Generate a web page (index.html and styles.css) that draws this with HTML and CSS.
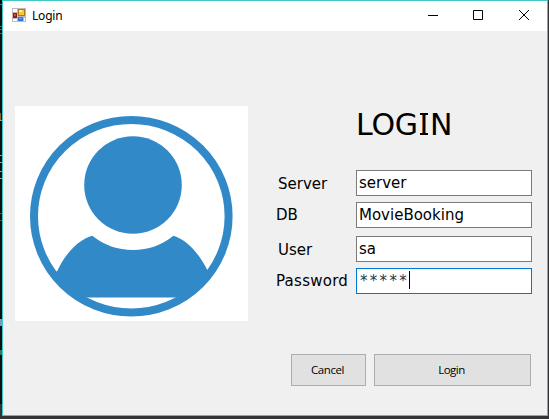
FILE: index.html
```html
<!DOCTYPE html>
<html lang="en">
<head>
<meta charset="utf-8">
<title>Login</title>
<link rel="stylesheet" href="styles.css">
</head>
<body>
<div class="desktop">
  <div class="gutter"></div>
  <main class="window">
    <header class="titlebar">
      <svg class="app-icon" width="14" height="14" viewBox="0 0 14 14" shape-rendering="crispEdges">
        <path fill="#bcbcbc" d="M0 0h14v14H0z"/>
        <path fill="#fff" d="M1 1h4v3H1zM1 11h4v2H1zM12 10h1v3h-1z"/>
        <path fill="#8f1d1a" d="M1 5h4v5H1z"/>
        <path fill="#d8473c" d="M2 6h2v2H2z"/>
        <path fill="#b07a10" d="M6 1h7v7H6z"/>
        <path fill="#f8c93c" d="M7 2h5v5H7z"/>
        <path fill="#fff0a0" d="M7 2h3v2H7z"/>
        <path fill="#3a70d0" d="M6 9h5v4H6z"/>
        <path fill="#78aaf5" d="M7 10h3v1H7z"/>
      </svg>
      <span class="title">Login</span>
      <div class="controls">
        <svg width="45" height="30" viewBox="0 0 45 30"><path d="M17 14.5h10"/></svg>
        <svg width="45" height="30" viewBox="0 0 45 30"><path d="M17.5 9.5h9v9h-9z"/></svg>
        <svg width="45" height="30" viewBox="0 0 45 30"><path d="M18 9l10 10M28 9l-10 10"/></svg>
      </div>
    </header>
    <section class="content">
      <svg class="avatar" width="233" height="215" viewBox="15 106 233 215">
        <path class="panel" d="M15 106h233v215H15z"/>
        <ellipse class="ring" cx="131.3" cy="216.3" rx="97.3" ry="96.3"/>
        <circle class="shape" cx="133" cy="185" r="48.8"/>
        <path class="shape" d="M92.3 235.8Q110 250 133 250Q156 250 173.4 235.8C187 240 199.500 254 207.300 270L211 275L192 291L182 297.600H80L70 291L52 275L57.300 271C64 256 77 240 92.300 235.800Z"/>
      </svg>
      <form class="form">
        <h1>LOG<span class="serif-i">I</span>N</h1>
        <div class="row server"><label>Server</label><div class="field">server</div></div>
        <div class="row db"><label>DB</label><div class="field">MovieBooking</div></div>
        <div class="row user"><label>User</label><div class="field">sa</div></div>
        <div class="row password"><label>Password</label><div class="field focused"><span class="mask">*****</span><i class="caret"></i></div></div>
        <div class="actions">
          <button type="button" class="cancel"><span>Cancel</span></button>
          <button type="button" class="submit"><span>Login</span></button>
        </div>
      </form>
    </section>
  </main>
</div>
</body>
</html>
```
FILE: styles.css
```css
* { box-sizing: border-box; }
body { margin: 0; background: #333336; overflow: hidden; }
.desktop { display: flex; width: 549px; height: 419px; }
.gutter {
  width: 2px;
  height: 404px;
  background:
    linear-gradient(#267c7c, #267c7c) 0 4px / 2px 1px no-repeat,
    linear-gradient(#267c7c, #267c7c) 0 26px / 2px 1px no-repeat,
    linear-gradient(#267c7c, #267c7c) 0 29px / 2px 1px no-repeat,
    linear-gradient(#267c7c, #267c7c) 0 33px / 2px 1px no-repeat,
    linear-gradient(#a35a20, #a35a20) 0 113px / 1px 7px no-repeat,
    linear-gradient(#8fa0a0, #8fa0a0) 0 120px / 2px 1px no-repeat,
    linear-gradient(#8fa0a0, #8fa0a0) 0 155px / 2px 1px no-repeat,
    linear-gradient(#8fa0a0, #8fa0a0) 0 162px / 2px 1px no-repeat,
    linear-gradient(#8da878, #8da878) 0 171px / 2px 1px no-repeat,
    linear-gradient(#8da878, #8da878) 0 178px / 2px 1px no-repeat,
    linear-gradient(#2d6b2d, #2d6b2d) 0 213px / 2px 1px no-repeat,
    linear-gradient(#2d6b2d, #2d6b2d) 0 220px / 2px 1px no-repeat,
    linear-gradient(#6f9fc4, #6f9fc4) 0 319px / 2px 7px no-repeat,
    linear-gradient(#2a7a68, #2a7a68) 0 350px / 2px 5px no-repeat,
    #101012;
}
.window {
  width: 546px;
  height: 416px;
  border: 1px solid #40c8c8;
  background: #f0f0f0;
}
.titlebar { display: flex; height: 30px; background: #fff; }
.app-icon { margin: 7px 0 0 9px; }
.title {
  margin-left: 6px;
  font: 12px/30px "Noto Sans", sans-serif;
  letter-spacing: -0.2px;
  color: #000;
}
.controls { display: flex; margin-left: auto; margin-right: 1px; }
.controls path { fill: none; stroke: #000; stroke-width: 1; }
.content { display: flex; }
.avatar { display: block; margin: 75px 0 0 12px; }
.panel { fill: #fff; }
.ring { fill: none; stroke: #3189c8; stroke-width: 8; }
.shape { fill: #3189c8; }
.form {
  width: 256px;
  margin-left: 28px;
  font-family: "DejaVu Sans", sans-serif;
  color: #000;
}
h1 {
  display: flex;
  height: 40px;
  margin: 74px 0 25px 80px;
  font-size: 30px;
  font-weight: 400;
  line-height: 40px;
  letter-spacing: -0.2px;
}
/* The capital I carries short bars at its top and foot. */
.serif-i {
  width: 12px;
  text-indent: 1.5px;
  background:
    linear-gradient(#000, #000) 2px 8px / 8px 2px no-repeat,
    linear-gradient(#000, #000) 2px 28px / 8px 2px no-repeat;
}
.row { display: flex; height: 26px; font-size: 15px; }
.row label { width: 80px; line-height: 26px; white-space: nowrap; }
.server label, .user label { padding-left: 2px; line-height: 28px; }
.db { margin-top: 6px; }
.user { margin-top: 8px; }
.password { margin-top: 6px; }
.password label { letter-spacing: 0.25px; }
.field {
  display: flex;
  width: 176px;
  height: 26px;
  padding-left: 2px;
  border: 1px solid #7a7a7a;
  background: #fff;
  line-height: 24px;
}
.focused { padding-left: 3px; border-color: #0078d7; }
.mask { letter-spacing: 2.3px; color: #203850; }
.caret { width: 1px; height: 18px; margin-top: 2px; background: #000; }
.actions { display: flex; gap: 8px; margin: 60px 0 0 15px; }
button {
  height: 32px;
  padding: 0 2px 0 0;
  border: 1px solid #adadad;
  background: #e1e1e1;
  color: #000;
  font: 11.5px/28px "Open Sans", sans-serif;
}
button span { display: block; }
.cancel { width: 75px; letter-spacing: -0.45px; }
.submit { width: 157px; letter-spacing: -0.5px; }
```
